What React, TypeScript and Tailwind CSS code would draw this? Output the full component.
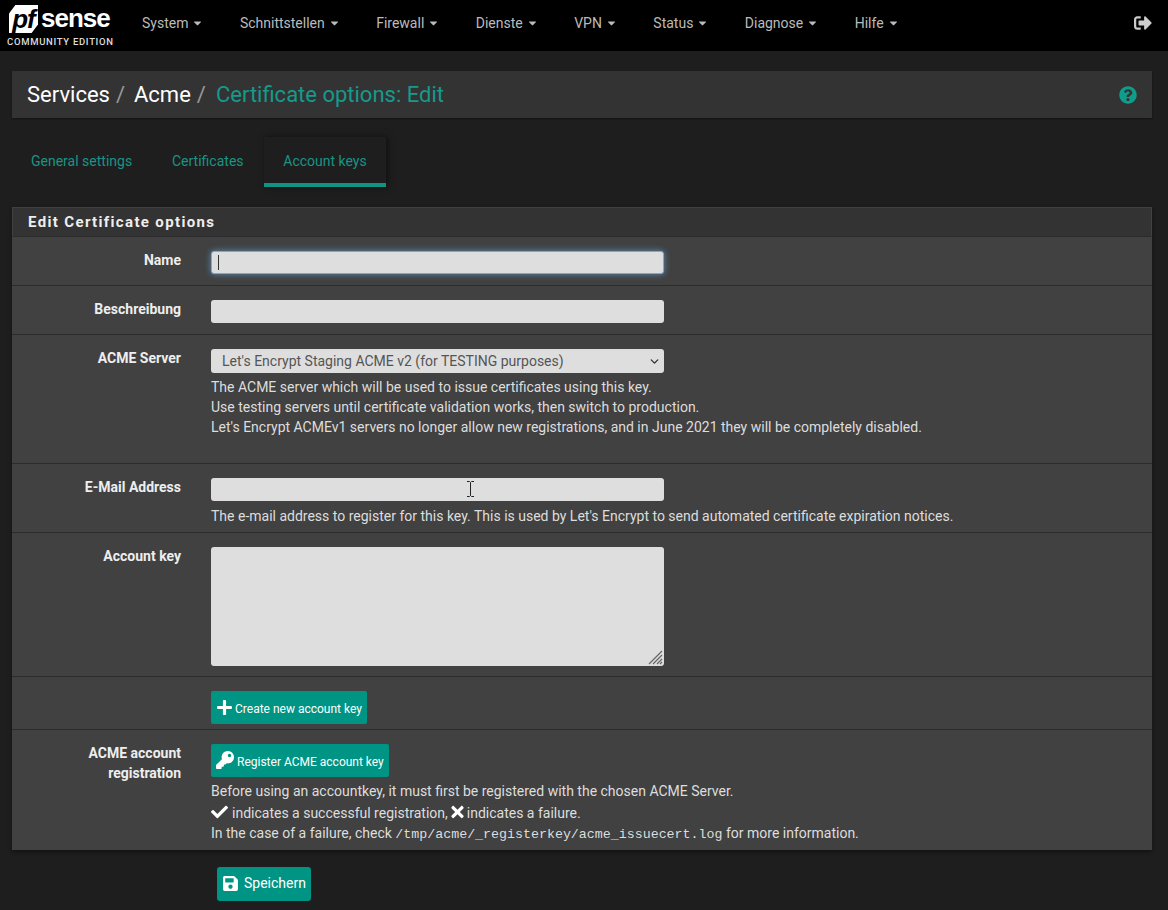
import type { ReactNode } from "react";
import { FaCaretDown, FaCheck, FaKey, FaPlus, FaQuestionCircle, FaSave, FaSignOutAlt, FaTimes } from "react-icons/fa";
import { ChevronDown } from "lucide-react";

const navItems = ["System", "Schnittstellen", "Firewall", "Dienste", "VPN", "Status", "Diagnose", "Hilfe"];

function Logo() {
  return (
    <div className="w-[121px] shrink-0 pt-[5px] pl-[7px]">
      <div className="flex h-[28px] items-center pl-[2px]">
        <div className="relative flex h-[28px] w-[29px] items-center justify-center">
          <div className="absolute inset-0 bg-white [clip-path:polygon(22%_0,100%_0,100%_70%,78%_100%,0_100%,0_30%)]" />
          <span className="relative font-['Liberation_Sans'] text-[26px] leading-[28px] font-bold tracking-[-1px] text-black italic">pf</span>
        </div>
        <span className="ml-[3px] pb-[2px] font-['Liberation_Sans'] text-[26px] leading-none font-bold tracking-[-1px] text-white">sense</span>
      </div>
      <div className="mt-[3px] text-[9.5px] leading-[11px] font-medium tracking-[0.7px] whitespace-nowrap text-[#ddd]">COMMUNITY EDITION</div>
    </div>
  );
}

function Row({ label, children, className }: { label?: ReactNode; children: ReactNode; className: string }) {
  return (
    <div className={"flex border-b border-[#2b2b2b] pt-[14px] " + className}>
      <div className="-mt-[1px] w-[169px] shrink-0 text-right text-[14px] leading-[20px] font-bold text-[#eee]">{label}</div>
      <div className="ml-[30px] flex-1 text-[14px] leading-[20px] text-[#ddd]">{children}</div>
    </div>
  );
}

const inputClass = "block h-[23px] w-[453px] rounded-[3px] bg-[#dedede] outline-none";

export default function App() {
  return (
    <div className="relative h-[910px] w-[1168px] overflow-hidden bg-[#1e1e1e] font-['Roboto',sans-serif]">
      <header className="flex h-[51px] items-center bg-black">
        <div className="self-start">
          <Logo />
        </div>
        <nav className="ml-[21px] flex gap-[37.45px] pb-[5px] text-[14px] text-[#bbb]">
          {navItems.map((item) => (
            <span key={item} className="flex items-center gap-[5px]">
              {item}
              <FaCaretDown className="h-[12px] w-[9px]" />
            </span>
          ))}
        </nav>
        <FaSignOutAlt className="ml-auto mr-[16px] mb-[5px] h-[18px] w-[18px] text-[#ccc]" />
      </header>

      <div className="mt-[20px] mr-[16px] ml-[12px] flex h-[47px] items-center bg-[#333] pr-[15px] pl-[15px] text-[22px] shadow-[0_1px_2px_rgba(0,0,0,0.4)]">
        <span className="text-white">Services</span>
        <span className="ml-[6px] text-[#999]">/</span>
        <span className="ml-[9px] text-white">Acme</span>
        <span className="ml-[6px] text-[#999]">/</span>
        <span className="ml-[10px] text-[#159a8c]">Certificate options: Edit</span>
        <FaQuestionCircle className="ml-auto h-[18px] w-[18px] text-[#0f9d8b]" />
      </div>

      <div className="mx-[12px] mt-[19px] flex h-[50px] text-[14px] text-[#1a9485]">
        <div className="flex w-[139px] items-center pb-[2px] pl-[19px]">General settings</div>
        <div className="flex w-[113px] items-center pb-[2px] pl-[21px]">Certificates</div>
        <div className="flex w-[122px] items-center justify-center border-b-[4px] border-[#0f9484] pt-[2px] shadow-[2px_0_6px_rgba(0,0,0,0.5)]">Account keys</div>
      </div>

      <section className="mt-[20px] mr-[16px] ml-[12px] h-[643px] bg-[#414141] shadow-[0_2px_4px_rgba(0,0,0,0.4)]">
        <h2 className="flex h-[30px] items-center border border-[#414141] border-b-[#2b2b2b] bg-[#333] pl-[15px] text-[15px] font-bold tracking-[1.35px] text-[#eee]">
          Edit Certificate options
        </h2>
        <Row label="Name" className="h-[49px]">
          <div className="relative">
            <input aria-label="Name" className={inputClass + " border border-[#66afe9] shadow-[0_0_6px_rgba(102,175,233,0.7)]"} />
            <div className="absolute top-[4px] left-[7px] h-[15px] w-[1px] bg-[#333]" />
          </div>
        </Row>
        <Row label="Beschreibung" className="h-[49px]">
          <input aria-label="Beschreibung" className={inputClass} />
        </Row>
        <Row label="ACME Server" className="h-[129px]">
          <div className="relative h-[24px] w-[453px]">
            <select aria-label="ACME Server" className="block h-[24px] w-[453px] appearance-none rounded-[3px] bg-[#dedede] pl-[11px] text-[14px] text-[#555] outline-none">
              <option>Let's Encrypt Staging ACME v2 (for TESTING purposes)</option>
            </select>
            <ChevronDown className="pointer-events-none absolute top-[6px] right-[3px] h-[13px] w-[13px] text-[#333]" strokeWidth={2.5} />
          </div>
          <p className="mt-[4px]">
            The ACME server which will be used to issue certificates using this key.
            <br />
            Use testing servers until certificate validation works, then switch to production.
            <br />
            Let's Encrypt ACMEv1 servers no longer allow new registrations, and in June 2021 they will be completely disabled.
          </p>
        </Row>
        <Row label="E-Mail Address" className="h-[69px]">
          <input aria-label="E-Mail Address" className={inputClass} />
          <p className="mt-[5px]">The e-mail address to register for this key. This is used by Let's Encrypt to send automated certificate expiration notices.</p>
        </Row>
        <Row label="Account key" className="h-[144px]">
          <div className="relative h-[119px] w-[453px]">
            <textarea aria-label="Account key" className="block h-[119px] w-[453px] resize-none rounded-[3px] bg-[#dedede] outline-none" />
            <svg className="pointer-events-none absolute right-[1px] bottom-[1px]" width="15" height="15" viewBox="0 0 15 15" stroke="#666" strokeWidth="1.2" fill="none">
              <path d="M1 14 14 1M5 14 14 5M9 14 14 9M12 14l2-2" />
            </svg>
          </div>
        </Row>
        <Row className="h-[53px]">
          <button className="flex h-[33px] w-[156px] items-center rounded-[2px] bg-[#009485] pt-[2px] pl-[5px] text-[12px] text-white">
            <FaPlus className="mr-[2px] -mt-[3px] h-[17px] w-[17px]" />
            Create new account key
          </button>
        </Row>
        <Row
          label={
            <>
              ACME account
              <br />
              registration
            </>
          }
          className="h-[120px] border-b-0"
        >
          <button className="flex h-[33px] w-[178px] items-center rounded-[2px] bg-[#009485] pt-[2px] pl-[5px] text-[12px] text-white">
            <FaKey className="mr-[3px] -mt-[3px] h-[18px] w-[18px]" />
            Register ACME account key
          </button>
          <p className="mt-[4px]">Before using an accountkey, it must first be registered with the chosen ACME Server.</p>
          <p className="mt-[2px] flex items-center">
            <FaCheck className="mr-[4px] -mt-[2px] h-[18px] w-[17px] text-white" />
            indicates a successful registration,
            <FaTimes className="mr-[2px] ml-[2px] -mt-[2px] h-[18px] w-[15px] text-white" />
            indicates a failure.
          </p>
          <p>
            In the case of a failure, check <code className="font-['Liberation_Mono'] text-[13.3px]">/tmp/acme/_registerkey/acme_issuecert.log</code> for more information.
          </p>
        </Row>
      </section>

      <button className="mt-[17px] ml-[217px] flex h-[34px] w-[94px] items-center gap-[5px] rounded-[3px] bg-[#009485] pb-[1px] pl-[5px] text-[14px] text-white">
        <FaSave className="h-[17px] w-[17px]" />
        Speichern
      </button>

      {/* mouse pointer from the capture */}
      <svg className="absolute top-[481px] left-[466px]" width="9" height="16" viewBox="0 0 9 16" fill="none" stroke="#222" strokeWidth="1">
        <path d="M1 .5h2.5l1 1 1-1H8M4.5 1.5v13M1 15.5h2.5l1-1 1 1H8" />
      </svg>
    </div>
  );
}
